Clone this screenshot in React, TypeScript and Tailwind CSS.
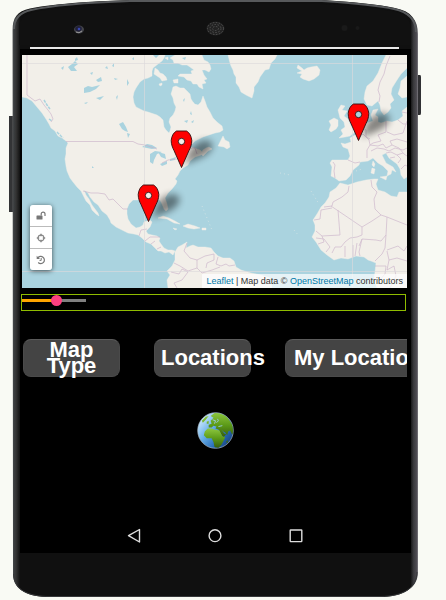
import { useState } from "react";

const LAND: string[] = [
  // North America
  "M22 55V97L27 98 32 101 37 107 42 113 46 119 49 124 51 128 55 131 58 136 62 138 66 141 68 143 66 148 66 154 65 159 66 166 67 171 70 178 73 182 77 187 81 191 84 197 86 201 90 205 92 210 96 214 99 216 98 213 95 209 92 205 89 199 86 195 84 190 88 193 90 197 94 202 98 205 102 211 107 215 110 220 111 223 116 227 122 230 128 233 134 234 138 235 142 238 146 242 151 244 154 247 158 251 161 251 165 253 169 252 173 255 175 251 172 250 168 250 164 248 161 244 159 241 160 238 157 236 152 235 148 234 146 231 150 227 152 222 150 220 144 222 143 225 140 227 136 228 131 224 128 219 127 214 127 209 129 204 133 200 139 200 144 202 149 200 154 199 160 200 162 204 164 209 166 211 168 209 167 204 165 198 168 193 172 189 176 184 177 181 175 179 178 175 180 171 183 168 188 165 190 161 195 157 201 155 203 153 200 150 194 148 188 147 192 144 195 141 203 137 209 135 215 133 220 132 223 130 222 126 217 122 213 118 210 112 207 107 205 101 203 96 202 99 201 102 198 105 195 104 193 102 191 99 190 94 187 91 184 88 180 88 176 86 173 87 172 91 171 94 173 98 174 103 176 107 175 111 173 115 170 118 169 122 171 127 170 131 169 133 166 130 164 127 163 120 160 117 157 115 148 112 144 111 140 109 136 107 134 103 133 97 134 92 136 88 140 82 144 79 148 78 152 76 152 71 153 68 158 64 162 61 164 58 165 55Z",
  // Nova Scotia and New Brunswick
  "M201 154L203 150 206 148 209 147 212 149 208 151 205 154 203 156Z",
  // Arctic islands
  "M155 68L158 70 160 73 163 74 166 77 167 80 162 81 160 78 157 76 154 74ZM159 84L162 83 162 85 160 86ZM173 80L178 79 178 83 174 83ZM165 58L168 57 168 60Z",
  "M175 55H202L204 60 208 62 210 65 211 69 209 72 205 70 202 70 204 75 207 79 204 80 206 83 202 84 203 89 199 87 197 84 193 84 191 81 187 80 184 77 178 76 180 74 186 74 192 74 191 71 194 70 190 67 187 65 182 65 178 63 174 63 173 60 170 58Z",
  // Greenland, Iceland
  "M228 55L230 63 231 66 233 70 234 74 236 77 236 83 239 87 241 92 246 95 252 98 254 91 254 87 258 82 260 77 265 70 269 69 271 63 275 59 277 55Z",
  "M297 68L298 65 302 68 304 70 307 68 311 67 317 66 320 70 319 75 314 79 309 81 303 79 300 77 302 74 297 73 302 71Z",
  // Newfoundland and the Caribbean
  "M218 146L221 140 223 136 225 140 229 142 230 147 227 149 224 147Z",
  "M158 218L163 216 169 218 175 221 180 224 174 223 167 219ZM183 226L188 224 195 226 200 228 194 229 188 228ZM173 228L177 229 175 230ZM202 228H206V230H202Z",
  // South America
  "M175 252L178 247 182 245 187 242 186 248 190 246 193 245 198 247 205 247 211 248 214 252 218 256 223 258 230 258 234 261 236 267 241 270 251 273 261 275 270 278 272 288H168L167 280 170 275 167 271 172 266 175 260Z",
  // British Isles
  "M338 110L341 105 345 106 342 110 347 111 344 116 348 119 350 124 353 129 355 132 350 136 345 137 339 138 343 134 341 130 345 127 344 122 340 118Z",
  "M329 130L331 125 329 121 334 118 338 120 338 126 336 129 331 132Z",
  // Scandinavia
  "M386 55L382 63 378 73 373 81 367 86 365 92 364 99 367 105 372 106 378 101 380 105 381 111 384 115 388 112 391 108 390 104 394 100 391 94 392 88 397 80 401 74 407 68V55Z",
  "M407 76L401 81 400 88 398 94 402 98 407 97Z",
  // Continental Europe
  "M407 107L402 111 403 116 398 120 392 122 387 121 381 123 378 122 378 117 375 115 378 109 373 110 371 115 373 121 367 123 362 127 357 134 350 138 351 142 345 144 341 143 343 147 348 149 350 156 348 160 340 160 332 160 330 163 332 167 331 176 335 178 339 181 346 180 350 176 353 170 359 165 360 162 368 161 373 158 378 163 383 166 388 171 387 176 391 174 392 170 396 172 393 167 386 163 382 155 386 153 389 158 397 164 400 169 401 175 404 179 407 177Z",
  "M373 161L375 164 374 167 372 165ZM372 168L375 169 374 174 371 173ZM380 177L387 176 386 180Z",
  // Africa
  "M340 183L348 185 357 182 366 180 374 179 378 179 376 184 378 190 385 192 391 196 397 197 399 192 407 192V288H377L374 279 375 272 376 263 371 261 368 260 364 257 356 256 348 259 341 258 334 260 327 255 321 250 316 242 312 237 315 231 315 225 313 220 317 214 321 207 325 203 329 197 330 192 336 188Z",
];

const LAKES: string[] = [
  "M68 67L72 64 75 61 78 64 74 67 77 71 71 71ZM84 88L88 86 92 87 100 85 96 89 90 92 84 93ZM96 80L101 77 102 81 98 82ZM96 98L104 96 100 100Z",
  "M119 124L123 122 126 127 128 132 125 131 122 129ZM127 133L130 134 128 138ZM114 78L118 79 115 80ZM127 79L129 83 127 86ZM116 97L118 95 117 100Z",
  "M142 147L147 144 152 145 157 148 152 149 147 148ZM150 154L155 151 162 152 157 154 154 160 153 164 150 162ZM158 152L165 154 166 159 161 157ZM160 164L167 161 167 164 162 166ZM170 159L176 157 175 160 170 161Z",
  "M75 59L77 57 78 60 75 61ZM61 68L64 66 63 70ZM132 59L134 57 134 60ZM90 73L93 72 92 75ZM105 68L107 66 108 69ZM112 66L114 63 114 67ZM84 103L88 102 86 104ZM92 166L94 168 92 168Z",
  "M183 100L185 98 184 102ZM184 121L188 120 187 123ZM191 111L192 115 190 114ZM191 122L194 120 193 123ZM153 55H159L156 58ZM182 58L186 57 185 60ZM192 90L197 92 200 89 201 97 199 103 195 104 192 98Z",
];

const BORDERS: string[] = [
  "M27 55V95L31 98 35 101 40 99 44 105 48 110 51 114 53 119 51 122",
  "M66 141.500H133L138 144 145 145 151 147 157 149M162 163L168 160 177 159 182 155 187 151 192 148 195 148 197 154",
  "M83 191L91 193H98L105 194 109 200 113 199 119 205 123 209 128 209",
  "M139 236L141 230 147 229M145 241L150 237 160 237M157 249L161 247M151 244L155 241",
  "M187 243L184 251 190 258 197 260 197 268 188 271 180 266 174 263M197 260L205 256 214 254 214 260 207 263 206 268M218 257L216 264 221 266 226 264 229 266 235 265M171 272L179 274 182 269 188 272 182 280 174 283 177 288M197 268L202 273 212 270 220 267",
  "M390 56L386 66 384 74 380 82 378 90 380 96 379 102",
  "M333 162L335 165 334 171 335 178M348 160L355 163 360 162M359 137L363 134 369 140 370 145 367 150 367 158M363 128L366 130 366 137 370 139M386 121L386 132 378 135 381 141 373 143 370 145 378 146 383 144 386 148 392 145 390 141 397 139 407 142M387 132L394 135 403 133 405 127 407 121M371 151L377 148 384 149 389 151 395 148 403 150 407 148M386 153L391 152 397 155 401 159 398 163M392 145L399 148 404 154 407 156M398 120L403 124 407 124M402 112L407 113M401 169L405 165 407 166M397 155L403 153M390 158L395 157",
  "M349 186L348 192 342 197 333 202 332 206 324 207M331 206L362 227 372 221 381 215 387 217 407 225M371 180L372 187 377 192 374 199 375 209 381 215M338 210L340 235 322 236 316 231M314 220L320 219 321 210 332 208M362 227L362 235 357 237 350 238 345 242 341 247 335 247 332 253M387 217L386 235 381 241 376 240 362 239 359 246M386 235L385 248 382 254 375 261M387 250L398 246 404 251 407 246M345 246V257M353 245V257M357 243L355 256M362 239L359 252 360 256M316 238L324 239 330 247 326 252M322 236L324 242 318 244M375 266H386L385 274 379 281M387 251L389 260 387 270 394 266 396 276 390 288M389 260L397 258 407 261",
];

const PIN =
  "M0 0L-7.500 -17C-9 -20 -10.300 -23 -10.300 -27C-10 -31 -8 -35 -5 -36.500H5C8 -35 10 -31 10.300 -27C10.300 -23 9 -20 7.500 -17ZM-3.200 -26A3.200 3.200 0 1 0 3.200 -26A3.200 3.200 0 1 0 -3.200 -26Z";

const PLACES = [
  { name: "Cancún", x: 148.5, y: 221.5 },
  { name: "New York", x: 181.5, y: 167.5 },
  { name: "Paris", x: 358.5, y: 140.5 },
];

function WorldMap() {
  return (
    <svg
      className="block h-full w-full"
      viewBox="22 55 385 233"
      preserveAspectRatio="xMidYMid slice"
      aria-hidden="true"
    >
      <defs>
        <filter id="soft" x="-60%" y="-60%" width="220%" height="220%">
          <feGaussianBlur stdDeviation="3.500" />
        </filter>
      </defs>
      <rect x="22" y="55" width="385" height="233" fill="#aad3df" />
      <g fill="#f2efe9" stroke="#f2efe9" strokeWidth="0.4" strokeLinejoin="round">
        {LAND.map((d) => (
          <path key={d} d={d} />
        ))}
      </g>
      <g fill="#aad3df">
        {LAKES.map((d) => (
          <path key={d} d={d} />
        ))}
      </g>
      <path
        d="M44 100L47 105 50 109M49 119L52 121M57 132L63 138M201 140L211 137"
        fill="none"
        stroke="#aad3df"
        strokeWidth="1.500"
        strokeDasharray="3 1"
      />
      <path
        d="M46 109L48 115M58 132L66 140M280 173L290 175M311 191L319 204M294 230L299 236M356 171L362 169M202 206L212 230"
        fill="none"
        stroke="#f2efe9"
        strokeWidth="1"
        strokeDasharray="1 3"
        opacity="0.5"
      />
      <g fill="none" stroke="#c8aec8" strokeWidth="0.8" strokeLinejoin="round" opacity="0.75">
        {BORDERS.map((d) => (
          <path key={d} d={d} />
        ))}
      </g>
      <path
        d="M22 63.500H407M22 271.500H407M144.500 55V288M352.500 55V288"
        fill="none"
        stroke="#dcd9dc"
        strokeWidth="1"
        opacity="0.65"
      />
      {PLACES.map((p) => (
        <g key={p.name} transform={`translate(${p.x} ${p.y})`}>
          <path
            d="M3 -3L8 -16C12 -24 22 -30 29 -26C34 -22 29 -14 20 -10Z"
            fill="#000"
            opacity="0.45"
            filter="url(#soft)"
          />
          <path d={PIN} fill="#f00" fillRule="evenodd" stroke="#331010" strokeWidth="0.9" />
        </g>
      ))}
    </svg>
  );
}

function PhoneBody() {
  return (
    <svg
      className="absolute inset-0 -z-10 h-full w-full"
      viewBox="0 0 446 600"
      preserveAspectRatio="none"
      aria-hidden="true"
    >
      <defs>
        <linearGradient id="rim" x1="12" x2="418.500" y1="0" y2="0" gradientUnits="userSpaceOnUse">
          <stop offset="0" stopColor="#777" />
          <stop offset="0.004" stopColor="#3c3f41" />
          <stop offset="0.010" stopColor="#333" />
          <stop offset="0.020" stopColor="#101010" />
          <stop offset="0.980" stopColor="#101010" />
          <stop offset="0.988" stopColor="#3a3a3d" />
          <stop offset="0.995" stopColor="#4c4a50" />
          <stop offset="1" stopColor="#8c8a90" />
        </linearGradient>
      </defs>
      <path d="M9 116H14V212H9Z" fill="#333436" />
      <path d="M417 75H420Q421 75 421 77V113Q421 115 420 115H417Z" fill="#303033" />
      <path
        d="M12.500 30C12.500 18 17 11 30 8.500C58 3 100 1 130 0H322C352 2 376 4 395 8C411 11 418 20 418 34V572C418 588 403 597 380 597H50C28 597 13 590 13 574Z"
        fill="url(#rim)"
      />
      <path
        d="M14 29C14 19 20 12.500 31 10C58 4 100 2 130 1H322C352 3 376 5 394 9C408 12 416 20 416 32"
        fill="none"
        stroke="#57595b"
        strokeWidth="2"
      />
      <path
        d="M19 25C21 17 27 14 34 12C60 7 100 5 140 4H318C350 5 374 8 392 11C404 13 411 19 411 29V45H19Z"
        fill="#111"
      />
      <path d="M13.500 574C14 590 28 596.500 50 596.500H380C403 596.500 417 588 417 572" fill="none" stroke="#37383a" />
    </svg>
  );
}

function Bezel() {
  return (
    <div className="flex h-[49px] flex-col justify-end pr-3 pl-[10px]">
      <svg className="h-[47px] w-full" viewBox="30 0 369 47" preserveAspectRatio="none" aria-hidden="true">
        <ellipse cx="79" cy="29.500" rx="5" ry="4" fill="#44454b" />
        <ellipse cx="78.500" cy="28.800" rx="3.300" ry="2.700" fill="#20203a" />
        <circle cx="79" cy="29" r="1.300" fill="#3845ad" />
        <path d="M76 32Q79 34 82 31" fill="none" stroke="#999" />
        <ellipse cx="215.500" cy="28.500" rx="9" ry="7" fill="#222" />
        <g fill="none" stroke="#585858" strokeWidth="0.900" strokeDasharray="1.500 1.500">
          <ellipse cx="215.500" cy="28.500" rx="8" ry="6" />
          <ellipse cx="215.500" cy="28.500" rx="5.500" ry="4" />
          <ellipse cx="215.500" cy="28.500" rx="3" ry="2" />
        </g>
        <circle cx="344.500" cy="28" r="3" fill="#1a1a1a" />
        <circle cx="357.500" cy="28" r="2" fill="#191919" />
      </svg>
      <div className="h-[2px] bg-[#e9e9e9]" />
    </div>
  );
}

const toolButton =
  "flex h-[22px] w-[22px] items-center justify-center border-b border-[#bbb] bg-white last:h-[21px] last:border-b-0";

function MapTools() {
  return (
    <div className="absolute bottom-[18px] left-2 overflow-hidden rounded-[3px] shadow-[0_1px_5px_rgba(0,0,0,0.65)]">
      <button type="button" aria-label="Unlock map" className={toolButton}>
        <svg width="10" height="10" viewBox="0 0 10 10">
          <rect x="0.500" y="4.500" width="6" height="4" rx="0.500" fill="#777" />
          <path d="M5.200 4.500V3A1.900 1.900 0 0 1 9 3V5" fill="none" stroke="#777" strokeWidth="1.200" />
        </svg>
      </button>
      <button type="button" aria-label="Centre map" className={toolButton}>
        <svg width="10" height="10" viewBox="0 0 10 10" fill="none" stroke="#888">
          <circle cx="5" cy="5" r="2.900" strokeWidth="1.100" />
          <path d="M5 0.800V3.200M5 6.800V9.200M0.800 5H3.200M6.800 5H9.200" strokeWidth="1.500" />
        </svg>
      </button>
      <button type="button" aria-label="Reset view" className={toolButton}>
        <svg width="10" height="10" viewBox="0 0 10 10" fill="none" stroke="#777">
          <path d="M1.800 3A3.600 3.600 0 1 1 2.200 7.500" strokeWidth="1.200" />
          <path d="M0.700 0.800V4H4Z" fill="#777" stroke="none" />
          <path d="M5.200 3V5.400H3.500" />
        </svg>
      </button>
    </div>
  );
}

function Globe() {
  return (
    <svg width="37" height="37" viewBox="0 0 38 38" aria-hidden="true">
      <defs>
        <linearGradient id="sea" x1="0.100" y1="0.200" x2="0.900" y2="0.900">
          <stop offset="0" stopColor="#c4e4fc" />
          <stop offset="0.350" stopColor="#67aee8" />
          <stop offset="0.700" stopColor="#2a6eb8" />
          <stop offset="1" stopColor="#163f7d" />
        </linearGradient>
        <linearGradient id="ground" x1="0.500" y1="0" x2="0.500" y2="1">
          <stop offset="0" stopColor="#8cc63e" />
          <stop offset="0.500" stopColor="#5c9a18" />
          <stop offset="1" stopColor="#365c0c" />
        </linearGradient>
        <clipPath id="disc">
          <circle cx="19" cy="19" r="18" />
        </clipPath>
      </defs>
      <circle cx="19" cy="19" r="18.300" fill="url(#sea)" stroke="#a9b9c8" strokeWidth="0.700" />
      <g clipPath="url(#disc)" fill="url(#ground)">
        <path d="M14 4L18 1 24 1 31 5 37 14 38 22 36 23 34 19 32 20 31 24 29 21 27 20 25 18 28 22 30 23 27 26 25 23 22 18 19 17 20 15 17 14 15 16 12 16 12 13 15 12 14 9 17 6Z" />
        <path d="M8 20L11 17 15 17 18 18 23 19 26 25 29 26 27 30 25 34 22 37 18 36 17 31 15 27 10 27 7 24Z" />
        <path d="M5 9L9 5 12 4 9 8 6 11ZM30 30L32 29 31 33ZM10 10L12 9 12 12 10 12Z" />
      </g>
      <path
        d="M16 8L19 9 18 12M21 7L22 9 20 11M22 15L26 14"
        fill="none"
        stroke="#9dcbed"
        strokeWidth="0.900"
      />
    </svg>
  );
}

const action =
  "h-[38px] w-[97px] shrink-0 rounded-lg border border-[#4a4a4a] border-t-[#5a5a5a] bg-[#444] text-[22px] leading-4 font-bold text-white";

const navButton = "flex h-5 w-5 items-center justify-center";

export default function App() {
  const [level, setLevel] = useState(54);
  const fill = `${11 * (0.5 - level / 100) + (level / 100) * 65}px`;

  return (
    <div className="min-h-screen bg-[#f9faf4] font-['Liberation_Sans',Arial,sans-serif]">
      <div className="relative isolate pr-[35px] pb-[47px] pl-5">
        <PhoneBody />
        <Bezel />
        <main className="bg-black pt-1.5 pr-1 pl-0.5">
          <section aria-label="Map" className="relative h-[233px] overflow-hidden">
            <WorldMap />
            <MapTools />
            <div className="absolute right-0 bottom-0 bg-white/70 px-1 text-[9px] leading-[14px] whitespace-nowrap text-[#333]">
              <a href="#leaflet" className="text-[#0078a8]">Leaflet</a> | Map data ©{" "}
              <a href="#openstreetmap" className="text-[#0078a8]">OpenStreetMap</a> contributors
            </div>
          </section>

          <div className="mt-1.5 mr-px -ml-px flex h-[17px] items-start border border-[#8fbc00]">
            <input
              type="range"
              aria-label="Zoom level"
              min="0"
              max="100"
              value={level}
              onChange={(e) => setLevel(Number(e.target.value))}
              style={{
                backgroundImage: `linear-gradient(to right, orange ${fill}, gray ${fill})`,
              }}
              className="h-[11px] w-16 appearance-none bg-[length:100%_3px] bg-center bg-no-repeat [&::-webkit-slider-thumb]:h-[11px] [&::-webkit-slider-thumb]:w-[11px] [&::-webkit-slider-thumb]:appearance-none [&::-webkit-slider-thumb]:rounded-full [&::-webkit-slider-thumb]:bg-[#ff4081]"
            />
          </div>

          <div className="mt-7 flex gap-[34px] overflow-hidden pb-1 pl-px">
            <button type="button" className={`${action} px-4`}>
              Map Type
            </button>
            <button type="button" className={`${action} px-1.5 text-left whitespace-nowrap`}>
              Locations
            </button>
            <button type="button" className={`${action} min-w-[154px] px-2 text-left whitespace-nowrap`}>
              My Locations
            </button>
          </div>

          <div className="mt-[31px] flex justify-center pl-0.5">
            <button type="button" aria-label="World view">
              <Globe />
            </button>
          </div>

          <nav aria-label="Device" className="mt-[77px] flex justify-center gap-[61px] pb-[7px]">
            <button type="button" aria-label="Back" className={navButton}>
              <svg width="20" height="16" viewBox="0 0 20 16" fill="none" stroke="#ddd" strokeWidth="1.400">
                <path d="M15.500 1.500V14L4.500 7.700Z" strokeLinejoin="round" />
              </svg>
            </button>
            <button type="button" aria-label="Home" className={navButton}>
              <svg width="20" height="16" viewBox="0 0 20 16" fill="none" stroke="#ddd" strokeWidth="1.400">
                <circle cx="10" cy="7.700" r="5.900" />
              </svg>
            </button>
            <button type="button" aria-label="Recent apps" className={navButton}>
              <svg width="20" height="16" viewBox="0 0 20 16" fill="none" stroke="#ddd" strokeWidth="1.400">
                <rect x="4.200" y="2" width="11.600" height="11.600" rx="0.500" />
              </svg>
            </button>
          </nav>
        </main>
      </div>
    </div>
  );
}
